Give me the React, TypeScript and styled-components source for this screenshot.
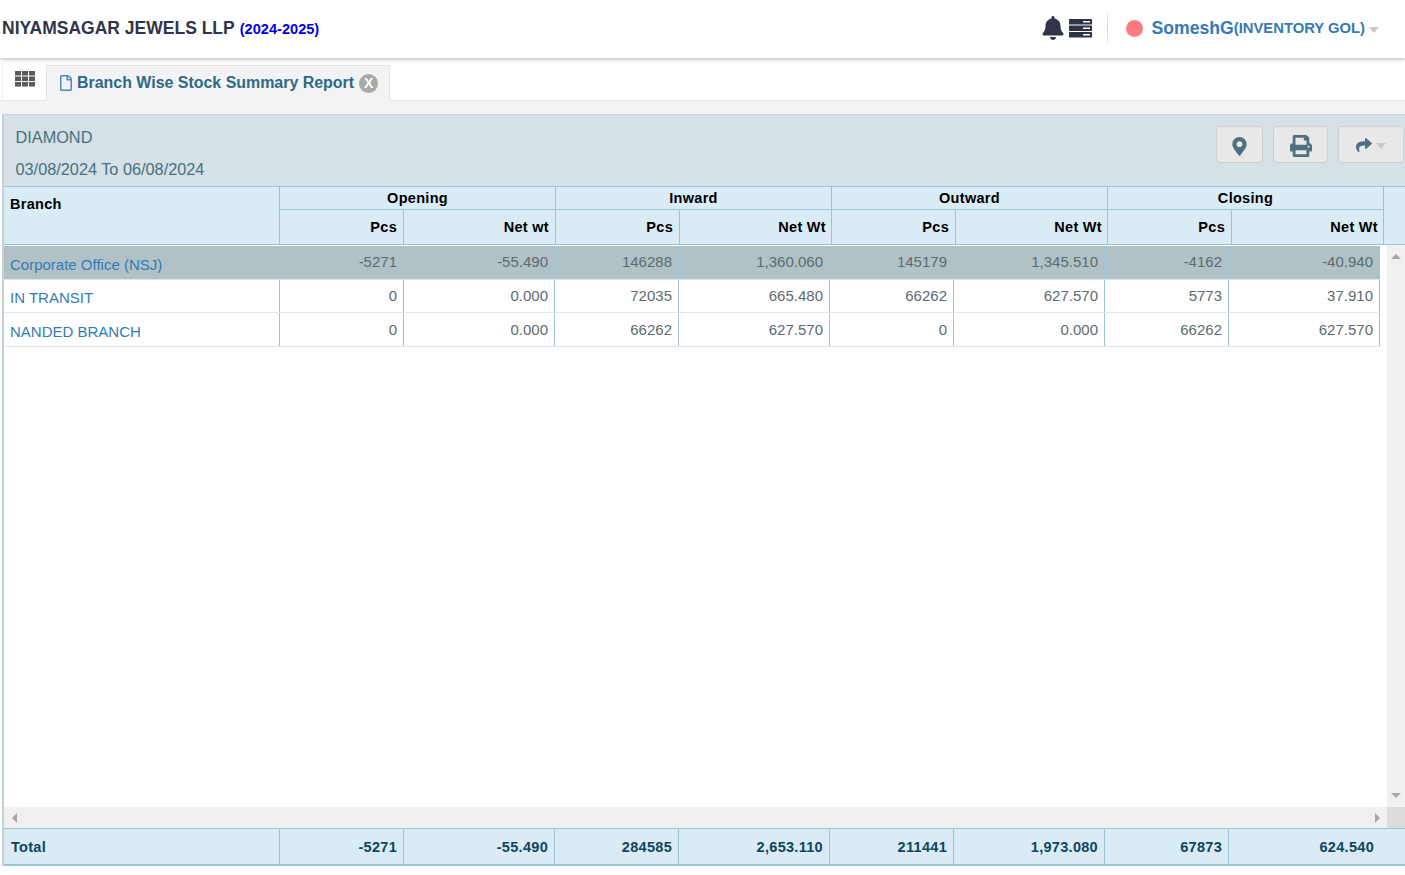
import { FC } from "react";
import styled, { createGlobalStyle } from "styled-components";
import { FaBell, FaRegFile, FaMapMarkerAlt, FaPrint, FaShare } from "react-icons/fa";

const GlobalStyle = createGlobalStyle`
  html, body { margin: 0; padding: 0; background: #fff; }
  body { font-family: "Liberation Sans", Arial, sans-serif; }
  * { box-sizing: border-box; }
`;

const bodyCols = "276px 124px 151px 124px 151px 124px 151px 124px 151px";
const headCols = "276px 124px 152px 124px 152px 124px 152px 124px 152px";
const line = "#9cc4d6";

const Page = styled.div`
  width: 1405px;
  height: 875px;
  overflow: hidden;
  display: flex;
  flex-direction: column;
`;

const TopBar = styled.header`
  height: 58px;
  flex: none;
  display: flex;
  align-items: center;
  justify-content: space-between;
  padding: 0 26px 2px 2px;
  background: #fff;
  box-shadow: 0 1px 4px rgba(0, 0, 0, 0.3);
  position: relative;
  z-index: 2;
`;

const Brand = styled.div`
  font-size: 17.5px;
  font-weight: 700;
  color: #2f3547;
  display: flex;
  align-items: baseline;
  gap: 5px;
`;

const Year = styled.span`
  font-size: 14.6px;
  color: #0000ee;
`;

const UserArea = styled.div`
  display: flex;
  align-items: center;
`;

const Bell = styled(FaBell)`
  width: 24px;
  height: 24px;
  color: #2f3547;
`;

const ServerIcon = styled.svg`
  width: 23px;
  height: 19px;
  margin-left: 4px;
`;

const Divider = styled.div`
  width: 1px;
  height: 36px;
  margin: 0 18px 0 15px;
  background: linear-gradient(#f4f4f4, #d4d4d4 50%, #f4f4f4);
`;

const StatusDot = styled.span`
  width: 17px;
  height: 17px;
  border-radius: 50%;
  background: #ff7b80;
  margin-right: 9px;
`;

const UserName = styled.span`
  font-size: 17.6px;
  font-weight: 700;
  color: #337ab7;
`;

const UserRole = styled.span`
  font-size: 14.8px;
  font-weight: 700;
  color: #337ab7;
`;

const Caret = styled.span<{ $color: string; $gap?: number }>`
  width: 0;
  height: 0;
  margin-left: ${(p) => p.$gap ?? 3}px;
  margin-top: 3px;
  border-left: 5.5px solid transparent;
  border-right: 5.5px solid transparent;
  border-top: 6px solid ${(p) => p.$color};
`;

const TabStrip = styled.nav`
  height: 43px;
  flex: none;
  display: flex;
  align-items: flex-end;
  padding-left: 2px;
  background: #fff;
  border-bottom: 1px solid #e3e3e3;
`;

const GridTab = styled.div`
  width: 44px;
  height: 36px;
  padding: 7px 0 0 12px;
  border-left: 1px solid #eee;
`;

const GridIcon = styled.svg`
  width: 20px;
  height: 16px;
  display: block;
`;

const ActiveTab = styled.div`
  height: 36px;
  margin-bottom: -1px;
  display: flex;
  align-items: center;
  padding: 0 11px 0 12px;
  background: #f3f3f3;
  border: 1px solid #e3e3e3;
  border-bottom: 1px solid #f3f3f3;
`;

const FileIcon = styled(FaRegFile)`
  width: 14px;
  height: 16px;
  color: #4c8dc0;
  margin-right: 4px;
`;

const TabTitle = styled.span`
  font-size: 15.95px;
  font-weight: 700;
  color: #2c6a87;
`;

const CloseBadge = styled.span`
  width: 19px;
  height: 19px;
  border-radius: 50%;
  margin-left: 5px;
  background: #a9a9a9;
  color: #fff;
  font-size: 14px;
  font-weight: 700;
  line-height: 19px;
  text-align: center;
`;

const Workspace = styled.main`
  flex: 1;
  min-height: 0;
  display: flex;
  flex-direction: column;
  padding-top: 13px;
  background: linear-gradient(#f3f3f3 13px, #fff 13px);
`;

const Panel = styled.section`
  margin-left: 2px;
  border-left: 2px solid #c3d2da;
  display: flex;
  flex-direction: column;
  height: 752px;
`;

const PanelHead = styled.div`
  height: 72px;
  flex: none;
  display: flex;
  justify-content: space-between;
  background: #d6e1e7;
  border-top: 1px solid #c9d6dd;
  padding: 11px 1px 0 11.5px;
`;

const PanelText = styled.div`
  font-size: 16.3px;
  color: #45727f;
  display: flex;
  flex-direction: column;
  gap: 14px;
  line-height: 18px;
  padding-top: 2px;
`;

const Actions = styled.div`
  display: flex;
  gap: 10px;
  align-items: flex-start;
`;

const ActionButton = styled.button<{ $width: number; $drop?: number }>`
  width: ${(p) => p.$width}px;
  height: 37px;
  padding: ${(p) => p.$drop ?? 0}px 0 0;
  display: flex;
  align-items: center;
  justify-content: center;
  gap: 1px;
  background: #e8e8e8;
  border: 1px solid #cfcfcf;
  border-radius: 3px;
  color: #51707f;
`;

const Head = styled.div`
  height: 59px;
  flex: none;
  display: grid;
  grid-template-columns: ${headCols} 1fr;
  grid-template-rows: 23px 34px;
  background: #d9ebf4;
  border-top: 1px solid ${line};
  border-bottom: 1px solid ${line};
  color: #000;
  font-size: 14.5px;
  font-weight: 700;
  letter-spacing: 0.3px;
`;

const BranchHead = styled.div`
  grid-column: 1;
  grid-row: 1 / span 2;
  padding: 9px 6px;
  border-right: 1px solid ${line};
  line-height: 16px;
`;

const GroupHead = styled.div`
  grid-column: span 2;
  text-align: center;
  line-height: 22px;
  border-right: 1px solid ${line};
  border-bottom: 1px solid ${line};
`;

const HeadFiller = styled.div`
  grid-column: 10;
  grid-row: 1 / span 2;
`;

const SubHead = styled.div<{ $right: number }>`
  text-align: right;
  padding-right: ${(p) => p.$right}px;
  line-height: 34px;
  border-right: 1px solid ${line};
`;

const ScrollArea = styled.div`
  flex: 1;
  min-height: 0;
  display: grid;
  grid-template-columns: 1fr 18px;
  grid-template-rows: 1fr 21px;
`;

const Rows = styled.div`
  padding-top: 1px;
`;

const Row = styled.div<{ $height: number; $selected?: boolean }>`
  display: grid;
  grid-template-columns: ${bodyCols};
  width: max-content;
  height: ${(p) => p.$height}px;
  background: ${(p) => (p.$selected ? "#b1c2c6" : "transparent")};
  border-bottom: 1px solid #d9e8ef;
  font-size: 15px;
  line-height: 17px;
`;

const NameCell = styled.div<{ $top: number }>`
  padding: ${(p) => p.$top}px 6px 0;
  color: #337ab7;
  border-right: 1px solid ${line};
`;

const NumCell = styled.div<{ $top: number }>`
  padding: ${(p) => p.$top}px 6px 0 0;
  text-align: right;
  color: #5b6b70;
  border-right: 1px solid ${line};
`;

const VScroll = styled.div`
  grid-row: 1 / span 2;
  grid-column: 2;
  background: linear-gradient(#f1f1f1 562px, #dcdcdc 562px);
  display: flex;
  flex-direction: column;
  justify-content: space-between;
  align-items: center;
  padding: 9px 0 30px;
`;

const HScroll = styled.div`
  background: #f0f0f0;
  display: flex;
  justify-content: space-between;
  align-items: center;
  padding: 0 7px 0 8px;
`;

const Arrow = styled.span<{ $dir: "up" | "down" | "left" | "right" }>`
  width: 0;
  height: 0;
  border: 5px solid transparent;
  ${(p) =>
    p.$dir === "up"
      ? "border-top-width: 0; border-bottom: 5px solid #a8a8a8;"
      : p.$dir === "down"
      ? "border-bottom-width: 0; border-top: 5px solid #a8a8a8;"
      : p.$dir === "left"
      ? "border-left-width: 0; border-right: 5px solid #a8a8a8;"
      : "border-right-width: 0; border-left: 5px solid #a8a8a8;"}
`;

const Footer = styled.div`
  height: 38px;
  flex: none;
  display: grid;
  grid-template-columns: ${bodyCols} 1fr;
  background: #d9ebf4;
  border-top: 1px solid ${line};
  border-bottom: 2px solid ${line};
  color: #0f4560;
  font-size: 14.5px;
  font-weight: 700;
  letter-spacing: 0.3px;
  line-height: 37px;
`;

const FootLabel = styled.div`
  padding-left: 7px;
  margin-bottom: 2px;
  border-right: 1px solid ${line};
`;

const FootNum = styled.div`
  text-align: right;
  padding-right: 6px;
  margin-bottom: 2px;
  border-right: 1px solid ${line};
  &:nth-child(9) { border-right: none; }
`;

interface IBranchRow {
  name: string;
  values: string[];
  height: number;
  nameTop: number;
  numTop: number;
  selected?: boolean;
}

const groups = ["Opening", "Inward", "Outward", "Closing"];
const subHeads = ["Pcs", "Net wt", "Pcs", "Net Wt", "Pcs", "Net Wt", "Pcs", "Net Wt"];

const rows: IBranchRow[] = [
  {
    name: "Corporate Office (NSJ)",
    values: ["-5271", "-55.490", "146288", "1,360.060", "145179", "1,345.510", "-4162", "-40.940"],
    height: 34,
    nameTop: 10,
    numTop: 7,
    selected: true,
  },
  {
    name: "IN TRANSIT",
    values: ["0", "0.000", "72035", "665.480", "66262", "627.570", "5773", "37.910"],
    height: 33,
    nameTop: 9,
    numTop: 7,
  },
  {
    name: "NANDED BRANCH",
    values: ["0", "0.000", "66262", "627.570", "0", "0.000", "66262", "627.570"],
    height: 34,
    nameTop: 10,
    numTop: 8,
  },
];

const totals = ["-5271", "-55.490", "284585", "2,653.110", "211441", "1,973.080", "67873", "624.540"];

const ReportRow: FC<{ row: IBranchRow }> = ({ row }) => (
  <Row $height={row.height} $selected={row.selected}>
    <NameCell $top={row.nameTop}>{row.name}</NameCell>
    {row.values.map((v, i) => (
      <NumCell key={i} $top={row.numTop}>
        {v}
      </NumCell>
    ))}
  </Row>
);

const App: FC = () => (
  <Page>
    <GlobalStyle />
    <TopBar>
      <Brand>
        NIYAMSAGAR JEWELS LLP <Year>(2024-2025)</Year>
      </Brand>
      <UserArea>
        <Bell />
        <ServerIcon viewBox="0 0 23 19">
          {[0, 6.5, 13].map((y) => (
            <g key={y}>
              <rect x="0" y={y} width="23" height="5.5" rx="0.5" fill="#2f3547" />
              <rect x="14" y={y + 2} width="7" height="1.5" fill="#fff" />
            </g>
          ))}
        </ServerIcon>
        <Divider />
        <StatusDot />
        <UserName>SomeshG</UserName>
        <UserRole>(INVENTORY GOL)</UserRole>
        <Caret $color="#c9c9c9" $gap={4} />
      </UserArea>
    </TopBar>
    <TabStrip>
      <GridTab>
        <GridIcon viewBox="0 0 20 16">
          {[0, 5.5, 11].map((y) =>
            [0, 7, 14].map((x) => <rect key={`${x}-${y}`} x={x} y={y} width="6" height="4.5" fill="#5a5a5a" />)
          )}
        </GridIcon>
      </GridTab>
      <ActiveTab>
        <FileIcon />
        <TabTitle>Branch Wise Stock Summary Report</TabTitle>
        <CloseBadge>X</CloseBadge>
      </ActiveTab>
    </TabStrip>
    <Workspace>
      <Panel>
        <PanelHead>
          <PanelText>
            <span>DIAMOND</span>
            <span>03/08/2024 To 06/08/2024</span>
          </PanelText>
          <Actions>
            <ActionButton $width={47} $drop={3}>
              <FaMapMarkerAlt size={19} />
            </ActionButton>
            <ActionButton $width={55} $drop={2}>
              <FaPrint size={22} />
            </ActionButton>
            <ActionButton $width={66}>
              <FaShare size={16} />
              <Caret $color="#c9c9c9" />
            </ActionButton>
          </Actions>
        </PanelHead>
        <Head>
          <BranchHead>Branch</BranchHead>
          {groups.map((g) => (
            <GroupHead key={g}>{g}</GroupHead>
          ))}
          <HeadFiller />
          {subHeads.map((s, i) => (
            <SubHead key={i} $right={s === "Net Wt" ? 5 : 6}>
              {s}
            </SubHead>
          ))}
        </Head>
        <ScrollArea>
          <Rows>
            {rows.map((r) => (
              <ReportRow key={r.name} row={r} />
            ))}
          </Rows>
          <VScroll>
            <Arrow $dir="up" />
            <Arrow $dir="down" />
          </VScroll>
          <HScroll>
            <Arrow $dir="left" />
            <Arrow $dir="right" />
          </HScroll>
        </ScrollArea>
        <Footer>
          <FootLabel>Total</FootLabel>
          {totals.map((t, i) => (
            <FootNum key={i}>{t}</FootNum>
          ))}
        </Footer>
      </Panel>
    </Workspace>
  </Page>
);

export default App;
